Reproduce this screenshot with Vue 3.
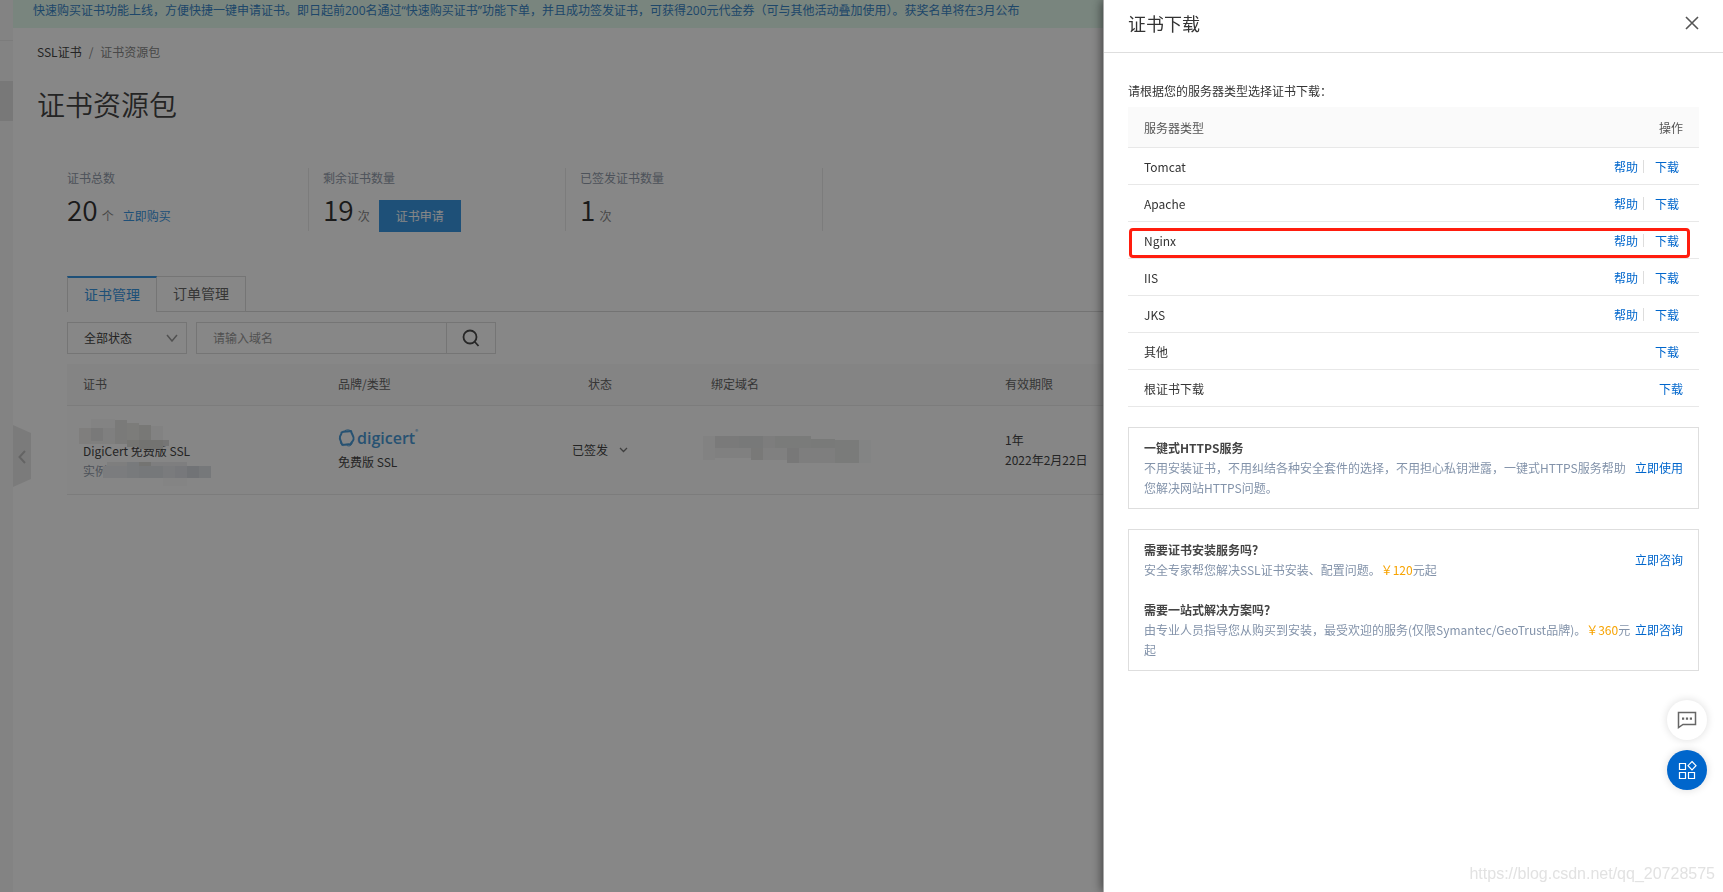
<script setup>
import { ref } from 'vue'

const tab = ref('cert')
const tabs = [
  { id: 'cert', label: '证书管理' },
  { id: 'order', label: '订单管理' },
]
const servers = [
  { name: 'Tomcat', help: true },
  { name: 'Apache', help: true },
  { name: 'Nginx', help: true, marked: true },
  { name: 'IIS', help: true },
  { name: 'JKS', help: true },
  { name: '其他' },
  { name: '根证书下载', last: true },
]
const nameMosaic = [
  { x: 0, y: 9, w: 12, h: 16, c: '#f0efec' },
  { x: 12, y: 9, w: 12, h: 13, c: '#e4e4e4' },
  { x: 12, y: 22, w: 24, h: 3, c: '#f0f0ee' },
  { x: 12, y: 0, w: 24, h: 9, c: '#f8f8f8' },
  { x: 24, y: 9, w: 12, h: 13, c: '#f0f0f0' },
  { x: 36, y: 1, w: 12, h: 24, c: '#e6e6e5' },
  { x: 48, y: 4, w: 12, h: 17, c: '#ebebe7' },
  { x: 60, y: 6, w: 12, h: 16, c: '#e3e3df' },
  { x: 72, y: 7, w: 12, h: 14, c: '#f6f6f6' },
  { x: 48, y: 21, w: 12, h: 7, c: '#dfdfd9' },
  { x: 60, y: 21, w: 24, h: 9, c: '#d9d9d6' },
  { x: 84, y: 21, w: 6, h: 6, c: '#dedede' },
]
const idMosaic = [
  { x: 0, y: 4, w: 24, h: 12, c: '#e9ebee' },
  { x: 4, y: 0, w: 20, h: 4, c: '#efefef' },
  { x: 24, y: 0, w: 12, h: 16, c: '#e3e6ea' },
  { x: 36, y: 0, w: 12, h: 4, c: '#dcdcd8' },
  { x: 36, y: 4, w: 24, h: 12, c: '#dfe2e7' },
  { x: 48, y: 0, w: 36, h: 4, c: '#eeeff0' },
  { x: 60, y: 4, w: 12, h: 12, c: '#e6e9ed' },
  { x: 72, y: 4, w: 12, h: 12, c: '#e0e3e8' },
  { x: 84, y: 4, w: 12, h: 12, c: '#d6d9df' },
  { x: 96, y: 4, w: 12, h: 12, c: '#dfe2e6' },
  { x: 60, y: 16, w: 24, h: 8, c: '#f9f9fa' },
]
const domainMosaic = [
  { x: 0, y: 0, w: 12, h: 24, c: '#f6f6f5' },
  { x: 12, y: 0, w: 24, h: 12, c: '#e6e7e6' },
  { x: 36, y: 0, w: 24, h: 12, c: '#e3e5e4' },
  { x: 60, y: 0, w: 12, h: 12, c: '#ecedec' },
  { x: 72, y: 0, w: 36, h: 12, c: '#e6e8e7' },
  { x: 108, y: 3, w: 24, h: 9, c: '#e5e6e5' },
  { x: 12, y: 12, w: 36, h: 10, c: '#f1f1f1' },
  { x: 48, y: 12, w: 12, h: 12, c: '#e4e4e3' },
  { x: 60, y: 12, w: 24, h: 12, c: '#f1f1f1' },
  { x: 84, y: 12, w: 12, h: 15, c: '#e2e3e2' },
  { x: 96, y: 12, w: 36, h: 15, c: '#eeefef' },
  { x: 132, y: 4, w: 24, h: 23, c: '#e7e8e7' },
  { x: 156, y: 4, w: 12, h: 23, c: '#f7faf9' },
]
</script>

<template>
  <div class="page">
    <aside class="side">
      <div class="side-line"></div>
      <div class="side-active"></div>
    </aside>
    <button class="handle" aria-label="收起">
      <svg width="18" height="62" viewBox="0 0 18 62">
        <path d="M0 0 18 8V54L0 62Z" fill="#e9e9e9" />
        <path d="M12 26 6.500 32 12 38" fill="none" stroke="#bdbdbd" stroke-width="2" />
      </svg>
    </button>

    <main class="main">
      <div class="banner">快速购买证书功能上线，方便快捷一键申请证书。即日起前200名通过“快速购买证书”功能下单，并且成功签发证书，可获得200元代金券（可与其他活动叠加使用）。获奖名单将在3月公布</div>
      <nav class="crumbs"><a href="#">SSL证书</a><i>/</i><span>证书资源包</span></nav>
      <h1>证书资源包</h1>

      <div class="body">
        <section class="stats">
          <div class="stat">
            <p>证书总数</p>
            <div class="figure"><b>20</b><span>个</span><a href="#">立即购买</a></div>
          </div>
          <div class="stat">
            <p>剩余证书数量</p>
            <div class="figure"><b>19</b><span>次</span><button class="apply">证书申请</button></div>
          </div>
          <div class="stat">
            <p>已签发证书数量</p>
            <div class="figure"><b>1</b><span>次</span></div>
          </div>
        </section>

        <div class="tabs">
          <button v-for="t in tabs" :key="t.id" class="tab" :class="{ on: tab === t.id }" @click="tab = t.id">{{ t.label }}</button>
        </div>

        <form class="filters" @submit.prevent>
          <div class="select">
            <select aria-label="状态"><option>全部状态</option></select>
            <svg width="12" height="8" viewBox="0 0 12 8"><path d="M1 1 6 7 11 1" fill="none" stroke="#999" stroke-width="1.500" /></svg>
          </div>
          <div class="search">
            <input type="text" aria-label="域名" placeholder="请输入域名" />
            <button aria-label="搜索">
              <svg width="18" height="18" viewBox="0 0 18 18" fill="none" stroke="#4a4a4a" stroke-width="1.800"><circle cx="8" cy="8" r="6.500" /><path d="M12.500 12.500 16.500 17" /></svg>
            </button>
          </div>
        </form>

        <table class="certs">
          <colgroup><col class="c1" /><col class="c2" /><col class="c3" /><col class="c4" /><col /></colgroup>
          <thead>
            <tr><th>证书</th><th>品牌/类型</th><th class="mid">状态</th><th>绑定域名</th><th>有效期限</th></tr>
          </thead>
          <tbody>
            <tr>
              <td>
                <div class="cert">
                  <svg class="mosaic name" width="90" height="30"><rect v-for="(r, i) in nameMosaic" :key="i" :x="r.x" :y="r.y" :width="r.w" :height="r.h" :fill="r.c" /></svg>
                  <div>DigiCert 免费版 SSL</div>
                  <div class="muted">实例</div>
                  <svg class="mosaic ident" width="108" height="24"><rect v-for="(r, i) in idMosaic" :key="i" :x="r.x" :y="r.y" :width="r.w" :height="r.h" :fill="r.c" /></svg>
                </div>
              </td>
              <td>
                <div class="brand">
                  <svg width="18" height="20" viewBox="0 0 18 20" fill="none" stroke="#4a9bd8" stroke-linecap="round">
                    <path d="M3.500 4.500C6 2.500 9.500 4 13 3 13.500 6.500 16.500 8.500 15.500 11.500 15 13.500 13 14.500 12.500 16.500 9.500 15.500 7 17.500 4 16.500 3.500 13.500 1 11.500 2 8.500 2.500 7 3.800 6 3.500 4.500Z" stroke-width="2" stroke-linejoin="round" />
                    <path d="M7 2.500C9.500 1.500 12 1.500 13.500 3.500M9 17.500C11 18.500 13 18 14 15.500M2.500 13C2 15 3 17 5 17.500" stroke-width="1" />
                  </svg>
                  <span>digicert</span><sup>®</sup>
                </div>
                <div>免费版 SSL</div>
              </td>
              <td class="mid">
                <button class="status">已签发<svg width="9" height="6" viewBox="0 0 9 6"><path d="M1 1 4.500 4.500 8 1" fill="none" stroke="#777" stroke-width="1.300" /></svg></button>
              </td>
              <td><svg class="domain" width="168" height="27"><rect v-for="(r, i) in domainMosaic" :key="i" :x="r.x" :y="r.y" :width="r.w" :height="r.h" :fill="r.c" /></svg></td>
              <td>1年<br />2022年2月22日</td>
            </tr>
          </tbody>
        </table>
      </div>
    </main>
  </div>

  <div class="mask"></div>

  <section class="drawer" role="dialog" aria-labelledby="drawer-title">
    <header class="drawer-head">
      <h2 id="drawer-title">证书下载</h2>
      <button class="close" aria-label="关闭">
        <svg width="14" height="14" viewBox="0 0 14 14"><path d="M1 1 13 13M13 1 1 13" stroke="#555" stroke-width="1.600" /></svg>
      </button>
    </header>
    <div class="drawer-body">
      <p class="hint">请根据您的服务器类型选择证书下载：</p>
      <table class="servers">
        <thead><tr><th>服务器类型</th><th class="ops">操作</th></tr></thead>
        <tbody>
          <tr v-for="s in servers" :key="s.name" :class="{ marked: s.marked }">
            <td>{{ s.name }}</td>
            <td class="ops" :class="{ flush: s.last }"><a v-if="s.help" class="help" href="#">帮助</a><a href="#">下载</a></td>
          </tr>
        </tbody>
      </table>

      <div class="card">
        <div class="item">
          <div class="copy"><h3>一键式HTTPS服务</h3><p>不用安装证书，不用纠结各种安全套件的选择，不用担心私钥泄露，一键式HTTPS服务帮助您解决网站HTTPS问题。</p></div>
          <a href="#">立即使用</a>
        </div>
      </div>
      <div class="card">
        <div class="item">
          <div class="copy"><h3>需要证书安装服务吗？</h3><p>安全专家帮您解决SSL证书安装、配置问题。<em>￥120</em>元起</p></div>
          <a href="#">立即咨询</a>
        </div>
        <div class="item">
          <div class="copy"><h3>需要一站式解决方案吗？</h3><p>由专业人员指导您从购买到安装，最受欢迎的服务(仅限Symantec/GeoTrust品牌)。<em>￥360</em>元起</p></div>
          <a href="#">立即咨询</a>
        </div>
      </div>
    </div>
  </section>

  <div class="floats">
    <button class="float" aria-label="咨询">
      <svg width="20" height="18" viewBox="0 0 20 18"><path d="M1.500 1.500H18.500V13.500H6L1.500 16.500Z" fill="none" stroke="#666" stroke-width="1.500" /><path d="M5 6.500h2.200v2.200H5zM8.900 6.500h2.200v2.200H8.900zM12.800 6.500H15v2.200h-2.200z" fill="#666" /></svg>
    </button>
    <button class="float blue" aria-label="应用">
      <svg width="20" height="20" viewBox="0 0 20 20" fill="none" stroke="#fff" stroke-width="1.200"><path d="M2.500 3.500h6v6h-6zM2.500 12.500h6v6h-6zM11.500 12.500h6v6h-6zM15 1.500 19 5.700 15 9.900 11 5.700Z" /></svg>
    </button>
  </div>
  <div class="watermark">https://blog.csdn.net/qq_20728575</div>
</template>

<style>
body {
  background: #fff;
  overflow: hidden;
  font: 12px/20px "Noto Sans CJK SC", sans-serif;
  color: #333;
}
button, input, select { font: inherit; color: inherit; }
</style>

<style scoped>
* { box-sizing: border-box; }
h1, h2, h3, p { margin: 0; font-weight: 400; }
a { text-decoration: none; color: #06c; }
button { border: 0; padding: 0; background: none; cursor: pointer; }
svg { display: block; }

.page { position: relative; display: flex; min-height: 100vh; overflow: hidden; color: #444; }
.page a { color: #3a97e2; }
.side { flex: 0 0 13px; background: #f7f7f7; }
.side-line { height: 41px; border-bottom: 1px solid #ebebeb; }
.side-active { height: 40px; margin-top: 40px; background: #e3e3e3; }
.handle { position: absolute; left: 13px; top: 425px; }
.main { flex: 1; min-width: 0; }
.banner { height: 28px; padding: 1px 0 0 20px; background: #e4fbee; color: #3a86c8; font-family: "Open Sans", "Noto Sans CJK SC", sans-serif; white-space: nowrap; }
.crumbs { padding: 14px 24px 0; color: #888; }
.page .crumbs a { color: #444; }
.crumbs i { margin: 0 7px; font-style: normal; }
h1 { padding: 22px 24px 0; font-size: 28px; line-height: 40px; color: #444; font-weight: 350; }
.body { padding: 44px 24px 0 54px; }

.stats { display: flex; }
.stat { flex: 0 0 257px; height: 63px; padding-left: 14px; border-right: 1px solid #eaeaea; }
.stat:first-child { flex-basis: 242px; padding-left: 0; }
.stat p { color: #929baa; }
.figure { display: flex; align-items: baseline; height: 44px; line-height: 43px; color: #888; }
.figure b { margin-right: 4px; font-size: 28px; font-weight: 350; color: #333; }
.figure a { margin-left: 9px; }
.apply { height: 32px; margin-left: 9px; padding: 0 17px; line-height: 32px; background: #3a97e2; color: #fff; }

.tabs { display: flex; height: 36px; margin-top: 45px; box-shadow: inset 0 -1px #dadada; }
.tab { padding: 0 16px 2px; border: 1px solid #dedede; border-left-width: 0; font-size: 14px; color: #666; }
.tab.on { border-left-width: 1px; border-top: 2px solid #3a97e2; border-bottom: 0; background: #fff; color: #3a97e2; }

.filters { display: flex; gap: 9px; margin-top: 10px; }
.select { position: relative; width: 120px; }
.select select { width: 100%; height: 32px; padding: 0 16px; border: 1px solid #dedede; border-radius: 0; appearance: none; background: #fff; outline: 0; }
.select svg { position: absolute; right: 9px; top: 12px; pointer-events: none; }
.search { display: flex; width: 300px; height: 32px; border: 1px solid #dedede; }
.search input { flex: 1; min-width: 0; padding: 0 16px; border: 0; outline: 0; background: #fff; }
.search input::placeholder { color: #999; opacity: 1; }
.search button { display: grid; place-items: center; width: 49px; border-left: 1px solid #dedede; }

.certs { width: 100%; margin-top: 10px; border-collapse: collapse; table-layout: fixed; background: #fdfdfd; }
.c1 { width: 255px; }
.c2 { width: 183px; }
.c3 { width: 190px; }
.c4 { width: 294px; }
.certs th { height: 41px; padding: 0 16px; text-align: left; font-weight: 400; color: #666; background: #fafafa; border-bottom: 1px solid #ebebeb; }
.certs td { height: 89px; padding: 0 16px; border-bottom: 1px solid #ebebeb; vertical-align: middle; }
.certs .mid { text-align: center; }
.cert { position: relative; padding-top: 22px; }
.muted { color: #929baa; }
.mosaic { position: absolute; }
.name { left: -4px; top: 0; }
.ident { left: 20px; bottom: -5px; }
.brand { display: flex; align-items: center; height: 20px; margin-bottom: 4px; color: #4a9bd8; }
.brand span { margin-left: 1px; font: 600 16px/18px "Open Sans", sans-serif; }
.brand sup { align-self: flex-start; font-size: 6px; line-height: 8px; }
.status { display: inline-flex; align-items: center; gap: 11px; }
.domain { margin-left: -8px; }

.mask { position: fixed; inset: 0; background: rgba(0, 0, 0, .47); }
.drawer { position: fixed; top: 0; right: 0; bottom: 0; width: 619px; background: #fff; box-shadow: -1px 0 #aaa, -2px 0 10px rgba(0, 0, 0, .55); }
.drawer-head { display: flex; justify-content: space-between; align-items: center; height: 53px; padding: 0 24px 6px; border-bottom: 1px solid #dedede; }
h2 { font-size: 18px; line-height: 24px; }
.drawer-body { padding: 28px 24px 0; }
.hint { padding-bottom: 6px; }
.servers { width: 100%; border-collapse: separate; border-spacing: 0; }
.servers th { height: 41px; padding: 1px 16px 0; background: #fafafa; text-align: left; font-weight: 400; color: #555; border-bottom: 1px solid #e8e8e8; }
.servers td { height: 37px; padding: 1px 16px 0; border-bottom: 1px solid #e8e8e8; }
.servers .ops { text-align: right; }
.servers td.ops { padding-right: 20px; }
.servers td.flush { padding-right: 16px; }
.help { margin-right: 11px; padding-right: 6px; background: linear-gradient(#ddd, #ddd) right center / 1px 13px no-repeat; }
.marked { position: relative; }
.marked::after { content: ""; position: absolute; left: 1px; right: 9px; top: 6px; bottom: 1px; border: 3px solid #ff1d0e; border-radius: 4px; pointer-events: none; }

.card { margin-top: 20px; padding: 10px 15px; border: 1px solid #dedede; }
.item { display: flex; align-items: center; gap: 2px; }
.item + .item { margin-top: 20px; }
.item a { flex: none; }
.copy { flex: 1; }
h3 { font-size: 12px; font-weight: 700; color: #444; }
.copy p { color: #8393aa; }
em { font-style: normal; color: #f7a300; }

.floats { position: fixed; right: 16px; bottom: 102px; display: grid; gap: 10px; }
.float { display: grid; place-items: center; width: 40px; height: 40px; border-radius: 50%; background: #fff; box-shadow: 0 0 8px rgba(0, 0, 0, .14); }
.blue { background: #06c; }
.watermark { position: fixed; right: 8px; bottom: 8px; font: 16px/20px "Liberation Sans", sans-serif; color: #e2e2e2; }
</style>
